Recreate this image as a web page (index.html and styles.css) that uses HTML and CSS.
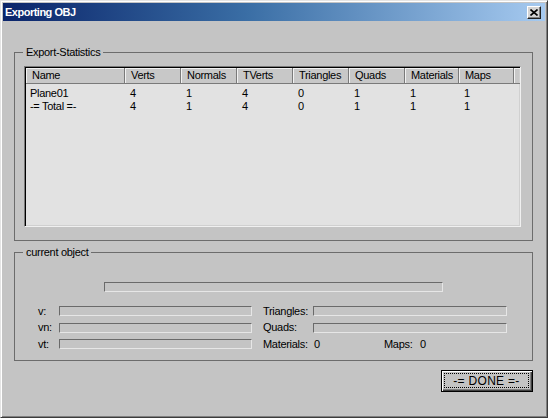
FILE: index.html
```html
<!DOCTYPE html>
<html>
<head>
<meta charset="utf-8">
<title>Exporting OBJ</title>
<link rel="stylesheet" href="styles.css">
</head>
<body>
<div class="window">
  <div class="titlebar">
    <span class="title">Exporting OBJ</span>
    <span class="close">
      <svg width="8" height="7" viewBox="0 0 8 7"><path d="M0.5 0.5L7.5 6.5M7.5 0.5L0.5 6.5" stroke="#000" stroke-width="1.6" fill="none"/></svg>
    </span>
  </div>
  <div class="client">
    <fieldset class="group stats">
      <legend>Export-Statistics</legend>
      <div class="list">
        <div class="row head">
          <span class="c">Name</span><span class="c">Verts</span><span class="c">Normals</span><span class="c">TVerts</span><span class="c">Triangles</span><span class="c">Quads</span><span class="c">Materials</span><span class="c">Maps</span><span class="c fill"></span>
        </div>
        <div class="rows">
          <div class="row item">
            <span class="c">Plane01</span><span class="c">4</span><span class="c">1</span><span class="c">4</span><span class="c">0</span><span class="c">1</span><span class="c">1</span><span class="c">1</span>
          </div>
          <div class="row item">
            <span class="c">-= Total =-</span><span class="c">4</span><span class="c">1</span><span class="c">4</span><span class="c">0</span><span class="c">1</span><span class="c">1</span><span class="c">1</span>
          </div>
        </div>
      </div>
    </fieldset>
    <fieldset class="group current">
      <legend>current object</legend>
      <div class="bar main-bar"></div>
      <div class="fields">
        <span class="lbl">v:</span><span class="bar left-bar"></span>
        <span class="lbl">Triangles:</span><span class="bar right-bar"></span>
        <span class="lbl">vn:</span><span class="bar left-bar"></span>
        <span class="lbl">Quads:</span><span class="bar right-bar"></span>
        <span class="lbl">vt:</span><span class="bar left-bar"></span>
        <span class="lbl">Materials:</span>
        <span class="counts"><span class="num">0</span><span class="maps">Maps:</span><span class="num">0</span></span>
      </div>
    </fieldset>
    <div class="actions">
      <button class="btn"><span class="focus">-= DONE =-</span></button>
    </div>
  </div>
</div>
</body>
</html>
```
FILE: styles.css
```css
html, body {
  margin: 0;
  padding: 0;
  background: #c4c4c4;
}
body {
  font-family: "Liberation Sans", Arial, sans-serif;
  font-size: 11px;
  letter-spacing: -0.3px;
  color: #000;
}
.window {
  width: 548px;
  height: 418px;
  box-sizing: border-box;
  border: 1px solid;
  border-color: #e4e4e4 #3c3c3c #3c3c3c #e4e4e4;
  box-shadow: inset 1px 1px 0 #ffffff, inset -1px -1px 0 #808080;
  padding: 2px;
  background: #c4c4c4;
}
.titlebar {
  height: 18px;
  display: flex;
  align-items: center;
  justify-content: space-between;
  padding: 0 4px 0 2px;
  background: linear-gradient(to right, #0a246a 0%, #3a6ea5 45%, #a6caf0 100%);
}
.title {
  color: #fff;
  font-weight: bold;
  font-size: 11px;
  letter-spacing: -0.5px;
  line-height: 13px;
}
.close {
  width: 14px;
  height: 13px;
  box-sizing: border-box;
  background: #d4d4d4;
  border: 1px solid;
  border-color: #ffffff #202020 #202020 #ffffff;
  box-shadow: inset -1px -1px 0 #808080;
  display: flex;
  align-items: center;
  justify-content: center;
  margin-top: 1px;
}
.close svg { display: block; }
.client {
  padding: 0;
}
.group {
  margin: 0 0 0 11px;
  width: 519px;
  box-sizing: border-box;
  border: 1px solid #6c6c6c;
  min-width: 0;
}
.group legend {
  padding: 0 3px;
  margin-left: 8px;
  line-height: 13px;
  height: 13px;
}
.stats {
  margin-top: 25px;
  padding: 7px 11px 13px 9px;
}
.stats legend {
  margin-left: -1px;
}
.list {
  height: 161px;
  box-sizing: border-box;
  border-style: solid;
  border-width: 1px;
  border-color: #7a7a7a #f0f0f0 #f0f0f0 #7a7a7a;
  box-shadow: inset 1px 1px 0 #000, inset -1px -1px 0 #d0d0d0;
  padding: 1px;
  background: #e2e2e2;
}
.row {
  display: grid;
  grid-template-columns: 99px 56px 56px 56px 56px 56px 54px 55px 1fr;
}
.head {
  height: 16px;
  background: #c8c8c8;
}
.head .c {
  box-sizing: border-box;
  border-right: 1px solid #7a7a7a;
  border-bottom: 1px solid #7a7a7a;
  box-shadow: inset 1px 1px 0 #f2f2f2;
  padding-left: 6px;
  line-height: 15px;
  white-space: nowrap;
  overflow: hidden;
}
.head .fill {
  border-right: none;
}
.rows {
  padding-top: 3px;
}
.item .c {
  line-height: 13px;
  padding-left: 5px;
  white-space: nowrap;
}
.item .c:first-child {
  padding-left: 4px;
}
.current {
  margin-top: 5px;
  padding: 23px 0 11px 0;
}
.bar {
  display: block;
  box-sizing: border-box;
  height: 10px;
  border: 1px solid;
  border-color: #6a6a6a #e6e6e6 #e6e6e6 #6a6a6a;
}
.main-bar {
  width: 339px;
  margin-left: 89px;
}
.fields {
  margin-top: 14px;
  margin-left: 23px;
  display: grid;
  grid-template-columns: 21px 204px 50px 194px;
  grid-auto-rows: 10px;
  row-gap: 6.5px;
  align-items: center;
}
.lbl {
  line-height: 13px;
  white-space: nowrap;
}
.left-bar {
  width: 193px;
}
.right-bar {
  width: 194px;
}
.counts {
  display: flex;
  line-height: 13px;
  white-space: nowrap;
}
.counts .num {
  width: 70px;
  padding-left: 1px;
}
.counts .maps {
  width: 35px;
}
.actions {
  display: flex;
  justify-content: flex-end;
  padding-right: 12px;
  margin-top: 9px;
}
.btn {
  width: 92px;
  height: 22px;
  box-sizing: border-box;
  font: inherit;
  letter-spacing: inherit;
  color: #000;
  background: #c4c4c4;
  border: 1px solid #000;
  box-shadow: inset 1px 1px 0 #ffffff, inset -1px -1px 0 #404040, inset -2px -2px 0 #808080;
  padding: 2px 3px 3px 2px;
  display: flex;
  margin: 0;
}
.focus {
  flex: 1;
  border: 1px dotted #000;
  display: flex;
  align-items: center;
  justify-content: center;
  font-size: 12px;
  letter-spacing: 0.3px;
}
```
